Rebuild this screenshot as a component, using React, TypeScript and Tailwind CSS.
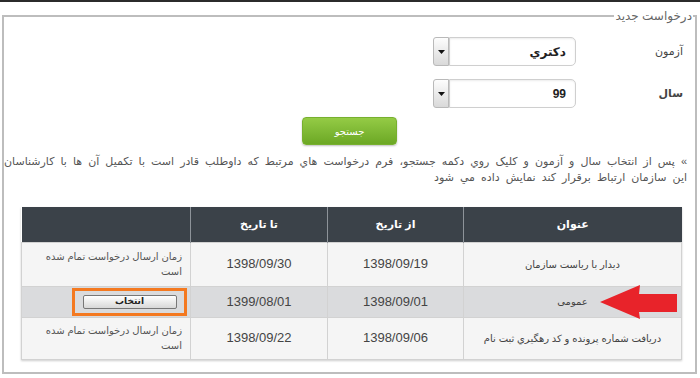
const rows = [
  { title: 'دیدار با ریاست سازمان', from: '1398/09/19', to: '1398/09/30', open: false },
  { title: 'عمومی', from: '1398/09/01', to: '1399/08/01', open: true },
  { title: 'دریافت شماره پرونده و کد رهگیري ثبت نام', from: '1398/09/06', to: '1398/09/22', open: false },
]

function SelectBox({ value }: { value: string }) {
  return (
    <div className="flex h-[29px] w-[143px]">
      <div className="flex-1 flex items-center justify-start pr-[9px] border border-[#cfcfcf] rounded-r-[5px] bg-white text-[12px] font-bold text-[#222] shadow-[inset_0_1px_2px_rgba(0,0,0,0.08)]">
        {value}
      </div>
      <div className="w-[16px] flex items-center justify-center border border-[#b9b9b9] rounded-l-[3px] bg-gradient-to-b from-[#fdfdfd] to-[#d9d9d9]">
        <svg width="7" height="4" viewBox="0 0 7 4"><path d="M0 0h7L3.5 4z" fill="#111" /></svg>
      </div>
    </div>
  )
}

export default function App() {
  return (
    <div dir="rtl" className="w-[700px] h-[378px] bg-white overflow-hidden font-['Liberation_Sans','DejaVu_Sans',sans-serif] text-[#333]">
      <div className="h-[2px] bg-[#2b2b2b]" />
      <fieldset className="mt-[5px] ml-[2px] mr-[3px] border-2 border-[#bdbdbd] px-0 pb-[12px] min-w-0">
        <legend className="mr-[2px] px-[1px] text-[12px] leading-[18px] text-[#666]">درخواست جدید</legend>

        <div className="pt-[12px] pr-[12px] flex flex-col">
          <div className="flex items-center">
            <div className="w-[107px] text-[11px] text-[#444]">آزمون</div>
            <SelectBox value="دکتري" />
          </div>
          <div className="flex items-center mt-[13px]">
            <div className="w-[107px] text-[11px] font-bold text-[#444]">سال</div>
            <SelectBox value="99" />
          </div>
        </div>

        <div className="flex justify-center mt-[9px]">
          <button className="w-[95px] h-[28px] rounded-[4px] bg-gradient-to-b from-[#94cb45] to-[#6ca824] border border-[#77b02e] text-white text-[10px] shadow-[0_1px_2px_rgba(0,0,0,0.25)]">
            جستجو
          </button>
        </div>

        <div className="mt-[8px] pr-[8px] text-[11px] leading-[16px] text-[#555] whitespace-nowrap [word-spacing:3px]">
          <div>» پس از انتخاب سال و آزمون و کلیک روي دکمه جستجو، فرم درخواست هاي مرتبط که داوطلب قادر است با تکمیل آن ها با کارشناسان</div>
          <div>این سازمان ارتباط برقرار کند نمایش داده مي شود</div>
        </div>

        <div className="relative mt-[22px] ml-[17px] mr-[13px]">
          <table className="w-full table-fixed border-collapse shadow-[0_1px_2px_rgba(0,0,0,0.2)]">
            <colgroup>
              <col className="w-[218px]" />
              <col className="w-[136px]" />
              <col className="w-[137px]" />
              <col />
            </colgroup>
            <thead>
              <tr className="h-[35px] bg-[#3b4249] text-white text-[11px] font-bold">
                <th className="border-l border-[#8d9399] font-bold">عنوان</th>
                <th className="border-l border-[#8d9399] font-bold">از تاریخ</th>
                <th className="border-l border-[#8d9399] font-bold">تا تاریخ</th>
                <th />
              </tr>
            </thead>
            <tbody>
              {rows.map((r, i) => (
                <tr key={i} className={r.open ? 'h-[31px] bg-[#dadbdd]' : i === 0 ? 'h-[44px] bg-[#f5f5f5]' : 'h-[42px] bg-[#f5f5f5]'}>
                  <td className="border border-[#d2d2d2] text-center text-[10px] text-[#444]">{r.title}</td>
                  <td className="border border-[#d2d2d2] text-center text-[13px] text-[#444]">{r.from}</td>
                  <td className="border border-[#d2d2d2] text-center text-[13px] text-[#444]">{r.to}</td>
                  <td className="border border-[#d2d2d2] pr-[3px]">
                    {r.open ? (
                      <div className="w-[115px] h-[28px] border-[3px] border-[#f47920] flex items-center justify-center">
                        <button className="w-[94px] h-[14px] border border-[#777] rounded-[2px] bg-gradient-to-b from-white to-[#d8d8d8] text-[9px] font-bold text-[#222] leading-none">
                          انتخاب
                        </button>
                      </div>
                    ) : (
                      <div className="pr-[5px] text-[10px] leading-[15px] text-[#555]">زمان ارسال درخواست تمام شده است</div>
                    )}
                  </td>
                </tr>
              ))}
            </tbody>
          </table>

          <svg className="absolute left-[579px] top-[78px]" width="78" height="34" viewBox="0 0 78 34">
            <path d="M0 17 L40 0 L39 9 L77 9 L77 27 L39 27 L40 34 Z" fill="#e8232a" />
          </svg>
        </div>
      </fieldset>
    </div>
  )
}
